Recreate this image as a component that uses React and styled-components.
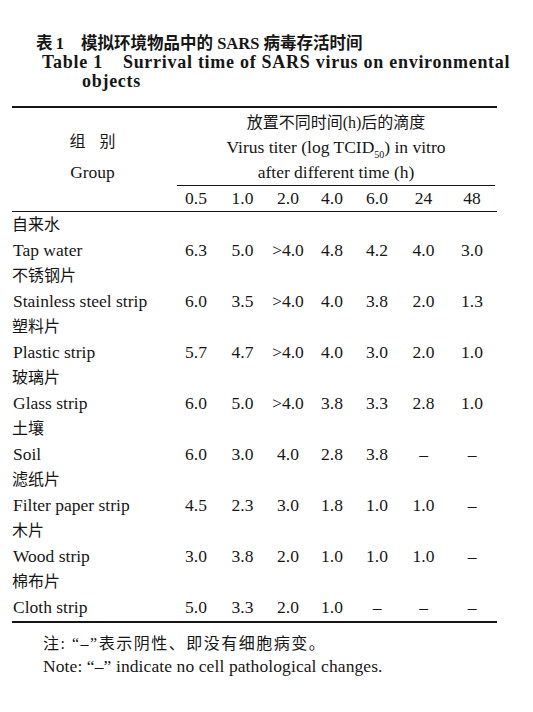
import React from 'react';
import styled, { createGlobalStyle } from 'styled-components';

const SERIF = '"Liberation Serif", "Noto Sans CJK SC", serif';
const ZH = '"Liberation Serif", "Noto Sans CJK SC", sans-serif';
const COLS = '161px 46px 47px 44px 44px 46px 47px 50px';
const INK = '#161616';

const TIMES = ['0.5', '1.0', '2.0', '4.0', '6.0', '24', '48'];

const GROUPS = [
  { zh: '自来水', en: 'Tap water', values: ['6.3', '5.0', '>4.0', '4.8', '4.2', '4.0', '3.0'] },
  { zh: '不锈钢片', en: 'Stainless steel strip', values: ['6.0', '3.5', '>4.0', '4.0', '3.8', '2.0', '1.3'] },
  { zh: '塑料片', en: 'Plastic strip', values: ['5.7', '4.7', '>4.0', '4.0', '3.0', '2.0', '1.0'] },
  { zh: '玻璃片', en: 'Glass strip', values: ['6.0', '5.0', '>4.0', '3.8', '3.3', '2.8', '1.0'] },
  { zh: '土壤', en: 'Soil', values: ['6.0', '3.0', '4.0', '2.8', '3.8', '–', '–'] },
  { zh: '滤纸片', en: 'Filter paper strip', values: ['4.5', '2.3', '3.0', '1.8', '1.0', '1.0', '–'] },
  { zh: '木片', en: 'Wood strip', values: ['3.0', '3.8', '2.0', '1.0', '1.0', '1.0', '–'] },
  { zh: '棉布片', en: 'Cloth strip', values: ['5.0', '3.3', '2.0', '1.0', '–', '–', '–'] }
];

const GlobalStyle = createGlobalStyle`
  html, body {
    margin: 0;
    background: #fff;
  }
  body {
    font-family: ${SERIF};
    color: ${INK};
  }
`;

const Page = styled.div`
  width: 533px;
  height: 712px;
  box-sizing: border-box;
  padding: 35px 0 0 12px;
  overflow: hidden;
`;

const ZhTitle = styled.h1`
  margin: 0 0 0 24px;
  font-family: ${ZH};
  font-size: 16.5px;
  line-height: 18px;
  font-weight: 700;
  white-space: nowrap;
`;

const TitleLabel = styled.span`
  display: inline-block;
  text-indent: 0;
  margin-right: ${(p) => p.gap}px;
`;

const EnTitle = styled.h2`
  margin: 0 0 15px 30px;
  width: 490px;
  padding-left: 40px;
  text-indent: -40px;
  box-sizing: border-box;
  font-size: 18px;
  line-height: 19px;
  font-weight: 700;
  letter-spacing: 0.72px;
`;

const Table = styled.div`
  width: 485px;
  border-top: 2.5px solid ${INK};
  border-bottom: 2px solid ${INK};
  font-size: 17.5px;
`;

const HeadBlock = styled.div`
  display: grid;
  grid-template-columns: ${COLS};
  border-bottom: 1px solid ${INK};
`;

const GroupHead = styled.div`
  grid-row: 1 / span 2;
  padding-top: 18px;
  text-align: center;
  line-height: 31px;
`;

const ZhWide = styled.div`
  font-family: ${ZH};
  font-size: 16px;
  letter-spacing: 14px;
  margin-right: -14px;
`;

const TiterTitle = styled.div`
  grid-column: 2 / -1;
  padding-top: 2px;
  margin: 0 2px 0 4px;
  border-bottom: 1px solid ${INK};
  text-align: center;
  line-height: 25px;
`;

const ZhLine = styled.div`
  font-family: ${ZH};
  font-size: 16px;
  line-height: ${(p) => p.lh || 25.5}px;
`;

const Sub = styled.sub`
  font-size: 10px;
  line-height: 0;
`;

const ValueRow = styled.div`
  display: grid;
  grid-template-columns: ${COLS};
  line-height: 25.5px;
`;

const Cell = styled.span`
  text-align: center;
  white-space: nowrap;
  line-height: ${(p) => p.lh || 25.5}px;
`;

const NameCell = styled.span`
  padding-left: 1px;
  white-space: nowrap;
`;

const Body = styled.div`
  padding-bottom: 1px;
`;

const Notes = styled.div`
  padding: 10px 0 0 31px;
  line-height: 22px;
`;

const NoteZh = styled.div`
  font-family: ${ZH};
  font-size: 16px;
  letter-spacing: 1.5px;
`;

const NoteEn = styled.div`
  font-size: 17.5px;
  letter-spacing: 0.1px;
`;

const GroupRows = ({ zh, en, values }) => (
  <>
    <ZhLine>{zh}</ZhLine>
    <ValueRow>
      <NameCell>{en}</NameCell>
      {values.map((v, i) => (
        <Cell key={i}>{v}</Cell>
      ))}
    </ValueRow>
  </>
);

export default function App() {
  return (
    <Page>
      <GlobalStyle />
      <ZhTitle>
        <TitleLabel gap={17}>表{'\u2009'}1</TitleLabel>
        模拟环境物品中的 SARS 病毒存活时间
      </ZhTitle>
      <EnTitle>
        <TitleLabel gap={20}>Table 1</TitleLabel>
        Surrival time of SARS virus on environmental objects
      </EnTitle>

      <Table>
        <HeadBlock>
          <GroupHead>
            <ZhWide>组别</ZhWide>
            <div>Group</div>
          </GroupHead>
          <TiterTitle>
            <ZhLine lh={25}>放置不同时间(h)后的滴度</ZhLine>
            <div>
              Virus titer (log TCID<Sub>50</Sub>) in vitro
            </div>
            <div>after different time (h)</div>
          </TiterTitle>
          {TIMES.map((t) => (
            <Cell key={t} lh={25}>{t}</Cell>
          ))}
        </HeadBlock>
        <Body>
          {GROUPS.map((g) => (
            <GroupRows key={g.en} {...g} />
          ))}
        </Body>
      </Table>

      <Notes>
        <NoteZh>注: “–”表示阴性、即没有细胞病变。</NoteZh>
        <NoteEn>Note: “–” indicate no cell pathological changes.</NoteEn>
      </Notes>
    </Page>
  );
}
